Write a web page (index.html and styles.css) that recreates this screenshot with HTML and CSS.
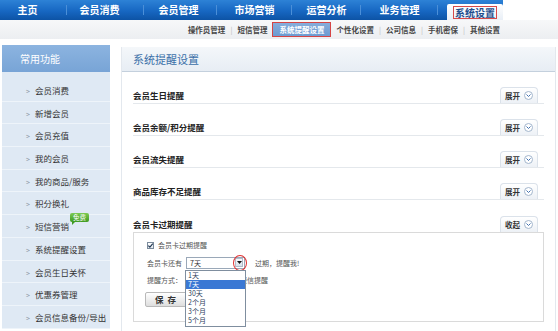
FILE: index.html
```html
<!DOCTYPE html>
<html lang="zh-CN">
<head>
<meta charset="utf-8">
<title>系统提醒设置</title>
<link rel="stylesheet" href="styles.css">
</head>
<body>
<div class="topnav">
  <div class="nav">
    <div class="nav-item ni-1">主页</div>
    <div class="nav-item ni-2">会员消费</div>
    <div class="nav-item ni-3">会员管理</div>
    <div class="nav-item ni-4">市场营销</div>
    <div class="nav-item ni-5">运营分析</div>
    <div class="nav-item ni-6">业务管理</div>
    <div class="nav-tab"><span class="mark">系统设置</span></div>
  </div>
</div>
<div class="subnav">
  <span class="sub">操作员管理</span><span class="sep">|</span>
  <span class="sub">短信管理</span>
  <span class="sub sub-active">系统提醒设置</span>
  <span class="sub">个性化设置</span><span class="sep">|</span>
  <span class="sub">公司信息</span><span class="sep">|</span>
  <span class="sub">手机密保</span><span class="sep">|</span>
  <span class="sub">其他设置</span>
</div>
<div class="page">
  <aside class="sidebar">
    <div class="side-head">常用功能</div>
    <ul class="side-list">
      <li><span class="arr">&gt;</span>会员消费</li>
      <li><span class="arr">&gt;</span>新增会员</li>
      <li><span class="arr">&gt;</span>会员充值</li>
      <li><span class="arr">&gt;</span>我的会员</li>
      <li><span class="arr">&gt;</span>我的商品/服务</li>
      <li><span class="arr">&gt;</span>积分换礼</li>
      <li><span class="arr">&gt;</span>短信营销<span class="badge">免费</span></li>
      <li><span class="arr">&gt;</span>系统提醒设置</li>
      <li><span class="arr">&gt;</span>会员生日关怀</li>
      <li><span class="arr">&gt;</span>优惠券管理</li>
      <li><span class="arr">&gt;</span>会员信息备份/导出</li>
    </ul>
  </aside>
  <main class="panel">
    <div class="panel-title">系统提醒设置</div>
    <div class="sections">
      <div class="row">
        <span class="row-title">会员生日提醒</span>
        <span class="toggle">展开<span class="circ"><svg width="7" height="7" viewBox="0 0 7 7"><path d="M1.5 2.5 L3.5 4.5 L5.5 2.5" fill="none" stroke="#3f6fae" stroke-width="1"/></svg></span></span>
      </div>
      <div class="row">
        <span class="row-title">会员余额/积分提醒</span>
        <span class="toggle">展开<span class="circ"><svg width="7" height="7" viewBox="0 0 7 7"><path d="M1.5 2.5 L3.5 4.5 L5.5 2.5" fill="none" stroke="#3f6fae" stroke-width="1"/></svg></span></span>
      </div>
      <div class="row">
        <span class="row-title">会员流失提醒</span>
        <span class="toggle">展开<span class="circ"><svg width="7" height="7" viewBox="0 0 7 7"><path d="M1.5 2.5 L3.5 4.5 L5.5 2.5" fill="none" stroke="#3f6fae" stroke-width="1"/></svg></span></span>
      </div>
      <div class="row">
        <span class="row-title">商品库存不足提醒</span>
        <span class="toggle">展开<span class="circ"><svg width="7" height="7" viewBox="0 0 7 7"><path d="M1.5 2.5 L3.5 4.5 L5.5 2.5" fill="none" stroke="#3f6fae" stroke-width="1"/></svg></span></span>
      </div>
      <div class="row row-open">
        <span class="row-title">会员卡过期提醒</span>
        <span class="toggle">收起<span class="circ"><svg width="7" height="7" viewBox="0 0 7 7"><path d="M1.5 2.5 L3.5 4.5 L5.5 2.5" fill="none" stroke="#3f6fae" stroke-width="1"/></svg></span></span>
      </div>
      <div class="box">
        <div class="line line-1">
          <span class="check"><svg width="7" height="7" viewBox="0 0 7 7"><path d="M1.3 3.6 L2.9 5.2 L5.8 1.6" fill="none" stroke="#1f3550" stroke-width="1.1"/></svg></span>
          <span>会员卡过期提醒</span>
        </div>
        <div class="line line-2">
          <span>会员卡还有</span>
          <span class="select">
            <span class="sel-val">7天</span>
            <span class="sel-btn"><svg width="5" height="3" viewBox="0 0 5 3"><polygon points="0,0 5,0 2.5,3" fill="#111"/></svg></span>
            <span class="red-ring"></span>
            <span class="droplist">
              <span class="opt">1天</span>
              <span class="opt opt-on">7天</span>
              <span class="opt">30天</span>
              <span class="opt">2个月</span>
              <span class="opt">3个月</span>
              <span class="opt">5个月</span>
            </span>
          </span>
          <span class="after-sel">过期，提醒我!</span>
        </div>
        <div class="line line-3">
          <span>提醒方式：</span>
          <span class="check check-2"></span>
          <span>短信提醒</span>
        </div>
        <div class="line line-4">
          <span class="save">保 存</span>
        </div>
      </div>
    </div>
  </main>
</div>
</body>
</html>
```
FILE: styles.css
```css
* { box-sizing: border-box; }
html, body { margin: 0; padding: 0; }
body {
  width: 558px;
  height: 331px;
  overflow: hidden;
  background: #fff;
  color: #333;
  font-family: "Noto Sans CJK SC", "Noto Sans", sans-serif;
}

/* top navigation */
.topnav { height: 20px; display: flex; }
.nav {
  width: 503px;
  height: 20px;
  display: flex;
  background: linear-gradient(#2d82d6, #1767c2 55%, #0d53a5);
}
.nav-item {
  position: relative;
  color: #fff;
  font-weight: bold;
  font-size: 10px;
  line-height: 20px;
  text-align: center;
}
.nav-item::after {
  content: "";
  position: absolute;
  right: 0;
  top: 5px;
  width: 1px;
  height: 10px;
  background: #4b8fd8;
}
.ni-1 { width: 67px; padding-right: 12px; }
.ni-2 { width: 77px; padding-right: 12px; }
.ni-3 { width: 73px; padding-right: 4px; }
.ni-4 { width: 75px; }
.ni-5 { width: 69px; }
.ni-6 { width: 77px; }
.nav-tab {
  margin: 4px 0 0 9px;
  width: 56px;
  height: 16px;
  border-radius: 2px 2px 0 0;
  background: linear-gradient(#ffffff, #e9eff7);
  display: flex;
  align-items: center;
  justify-content: center;
}
.mark {
  border: 1px solid #d84a4a;
  color: #1f4f8e;
  font-weight: bold;
  font-size: 10px;
  line-height: 11px;
  padding: 0 1px;
}

/* sub navigation */
.subnav {
  height: 19px;
  background: linear-gradient(#f7f8f9, #eceef1);
  display: flex;
  justify-content: flex-end;
  align-items: center;
  padding-right: 58px;
}
.sub {
  font-size: 7.5px;
  font-weight: bold;
  color: #444;
  line-height: 13px;
  white-space: nowrap;
}
.sep {
  font-size: 7.5px;
  color: #bbb;
  margin: 0 5px;
  line-height: 13px;
}
.sub-active {
  margin: 0 5px;
  padding: 0 6px;
  height: 15px;
  line-height: 13px;
  background: linear-gradient(#86addb, #6c9bd2);
  color: #fff;
  border: 1px solid #d64545;
}

/* page */
.page { display: flex; align-items: flex-start; }

.sidebar { margin: 6px 0 0 2px; width: 108px; flex: none; }
.side-head {
  height: 27px;
  background: linear-gradient(#8cb4e0, #78a4d6);
  color: #fff;
  font-size: 10px;
  line-height: 27px;
  padding-left: 18px;
}
.side-list {
  list-style: none;
  margin: 0;
  padding: 7px 0 0 0;
  background: #dfe9f4;
}
.side-list li {
  position: relative;
  height: 22.7px;
  border-bottom: 1px solid #eef4fa;
  padding-left: 24px;
  font-size: 8.5px;
  line-height: 22px;
  color: #333;
  white-space: nowrap;
}
.arr {
  color: #8a96a3;
  font-size: 7px;
  margin-right: 5px;
}
.badge {
  position: absolute;
  left: 68px;
  top: -2px;
  width: 19px;
  height: 9px;
  border-radius: 2px;
  background: linear-gradient(#7dcb52, #3e9a22);
  color: #fff;
  font-size: 6.5px;
  line-height: 9px;
  text-align: center;
}
.badge::after {
  content: "";
  position: absolute;
  left: 2px;
  bottom: -3px;
  border-top: 3px solid #3e9a22;
  border-right: 3px solid transparent;
}

/* main panel */
.panel {
  margin: 8px 0 0 11px;
  width: 435px;
  height: 284px;
  flex: none;
  border-left: 1px solid #e3e8ee;
  border-right: 1px solid #e3e8ee;
}
.panel-title {
  height: 25px;
  background: linear-gradient(#f4f7fa, #e7edf4);
  border-bottom: 1px solid #c4d0dd;
  color: #3a6fa8;
  font-size: 11px;
  line-height: 24px;
  padding-left: 11px;
}
.sections { padding: 0 11px; }
.row {
  height: 32px;
  border-bottom: 1px solid #e4e8ec;
  display: flex;
  justify-content: space-between;
  align-items: flex-end;
}
.row-open { border-bottom: none; }
.row-title {
  font-size: 8.5px;
  font-weight: bold;
  line-height: 16px;
  color: #222;
}
.toggle {
  width: 38px;
  height: 16px;
  margin-right: 6px;
  border: 1px solid #dbe2ea;
  border-bottom: none;
  border-radius: 4px 4px 0 0;
  background: linear-gradient(#ffffff, #edf1f6);
  display: flex;
  align-items: center;
  justify-content: center;
  gap: 4px;
  font-size: 7.5px;
  font-weight: bold;
  color: #333;
}
.circ {
  width: 9px;
  height: 9px;
  border-radius: 50%;
  border: 1px solid #a3b6cd;
  background: #fff;
  display: flex;
  align-items: center;
  justify-content: center;
}

/* expanded box */
.box {
  height: 90px;
  border: 1px solid #dadada;
  padding: 5px 0 0 13px;
  font-size: 7px;
  color: #555;
}
.line { display: flex; align-items: center; white-space: nowrap; }
.line-1 { height: 14px; }
.line-2 { height: 15px; margin-top: 3px; }
.line-3 { height: 14px; margin-top: 3px; }
.line-4 { margin-top: 5px; }
.check {
  width: 7px;
  height: 7px;
  border: 1px solid #7b8b9c;
  background: linear-gradient(#fff, #e4e9ef);
  display: flex;
  align-items: center;
  justify-content: center;
  margin-right: 4px;
}
.check svg { flex: none; }
.check-2 { margin-left: 47px; }
.select {
  position: relative;
  margin-left: 4px;
  width: 59px;
  height: 12px;
  border: 1px solid #9aa8b8;
  background: #fff;
  display: flex;
  align-items: center;
  justify-content: space-between;
}
.sel-val { padding-left: 3px; color: #333; }
.sel-btn {
  width: 8px;
  height: 9px;
  margin-right: 1px;
  border: 1px solid #b0bccb;
  background: linear-gradient(#f8fafc, #d8e0ea);
  display: flex;
  align-items: center;
  justify-content: center;
}
.red-ring {
  position: absolute;
  left: 46px;
  top: -3px;
  width: 14px;
  height: 16px;
  border: 1px solid #e03030;
  border-radius: 50%;
}
.droplist {
  position: absolute;
  left: -2px;
  top: 12px;
  width: 61px;
  border: 1px solid #7f8e9f;
  background: #fff;
  z-index: 5;
  display: flex;
  flex-direction: column;
}
.opt {
  height: 9.2px;
  line-height: 9.2px;
  padding-left: 2px;
  color: #2d3f5c;
  font-size: 7px;
}
.opt-on { background: #3a78d4; color: #fff; }
.after-sel { margin-left: 10px; }
.save {
  margin-left: -2px;
  width: 42px;
  height: 15px;
  border: 1px solid #b9b9b9;
  border-radius: 2px;
  background: linear-gradient(#ffffff, #dedede);
  color: #333;
  font-size: 8.5px;
  font-weight: bold;
  line-height: 13px;
  text-align: center;
  letter-spacing: 1px;
}
```
